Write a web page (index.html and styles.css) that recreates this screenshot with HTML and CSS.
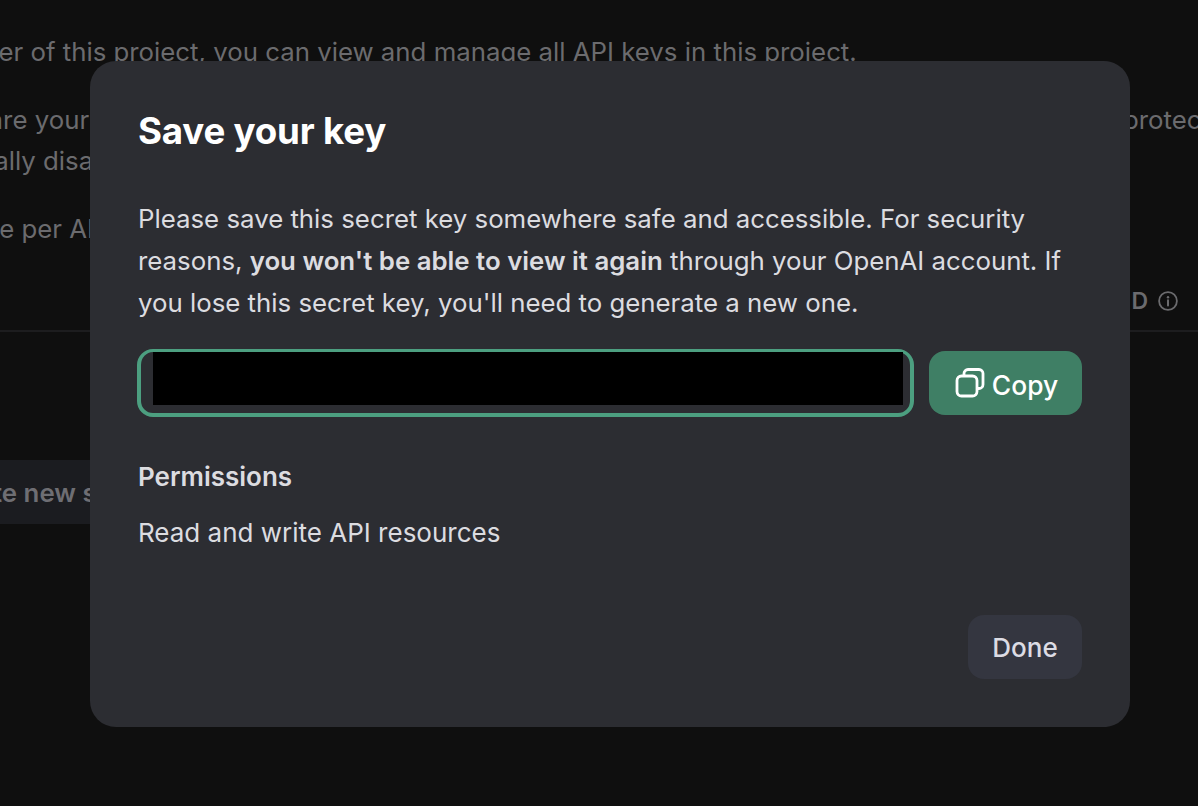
FILE: index.html
```html
<!DOCTYPE html>
<html lang="en">
<head>
  <meta charset="UTF-8">
  <title>Save your key</title>
  <link rel="stylesheet" href="styles.css">
</head>
<body>
  <div class="page">
    <p class="line line-first"><span class="cut-owner">Since you're an owner of this project, you can view and manage all API keys in this project.</span></p>
    <p class="line line-share">
      <span class="cut-share">Do not share your</span>
      <span class="right-part">protect</span>
    </p>
    <p class="line line-disable"><span class="cut-disable">automatically disa</span></p>
    <p class="line line-rate"><span class="cut-rate">View usage per AI</span></p>
    <div class="table-head">
      <span class="head-label">D</span>
      <svg class="info-icon" width="20" height="20" viewBox="0 0 20 20" fill="none">
        <circle cx="10" cy="10" r="8.9" stroke="currentColor" stroke-width="1.8"/>
        <circle cx="10" cy="6.2" r="1.2" fill="currentColor"/>
        <path d="M10 9.2v5.2" stroke="currentColor" stroke-width="2" stroke-linecap="round"/>
      </svg>
    </div>
    <button class="create-btn"><span class="cut-create">Create new secret key</span></button>
  </div>

  <div class="modal">
    <h1 class="modal-title">Save your key</h1>
    <p class="modal-text">Please save this secret key somewhere safe and accessible. For security reasons, <strong>you won't be able to view it again</strong> through your OpenAI account. If you lose this secret key, you'll need to generate a new one.</p>
    <div class="key-row">
      <div class="key-input"><div class="key-redacted"></div></div>
      <button class="copy-btn">
        <svg width="32" height="32" viewBox="0 0 32 32" fill="none">
          <rect x="2" y="9" width="20" height="20" rx="4.5" stroke="currentColor" stroke-width="2.8"/>
          <path d="M9 9V6.5C9 4.3 10.8 2.5 13 2.5h11c2.2 0 4 1.8 4 4v11c0 2.2-1.8 4-4 4h-2" stroke="currentColor" stroke-width="2.8"/>
        </svg>
        <span class="copy-label">Copy</span>
      </button>
    </div>
    <h2 class="perm-title">Permissions</h2>
    <p class="perm-text">Read and write API resources</p>
    <div class="modal-footer">
      <button class="done-btn">Done</button>
    </div>
  </div>
</body>
</html>
```

FILE: styles.css
```css
html, body {
  height: 100%;
  margin: 0;
}

body {
  background-color: #0f0f0f;
  font-family: Inter, "Liberation Sans", sans-serif;
  overflow: hidden;
}

.page {
  height: 100%;
  overflow: hidden;
  color: #6b6b6e;
  font-size: 25.8px;
  line-height: 41px;
}

.line {
  display: flex;
  justify-content: space-between;
  margin: 0;
  white-space: nowrap;
}

.line-first { margin-top: 31px; }
.line-share { margin-top: 27px; }
.line-rate { margin-top: 27px; }

.cut-owner { margin-left: -249px; }
.cut-share { margin-left: -128px; }
.cut-disable { margin-left: -126px; }
.cut-rate { margin-left: -127px; }

.right-part {
  flex: 0 0 75px;
  min-width: 0;
}

.table-head {
  display: flex;
  justify-content: flex-end;
  align-items: center;
  gap: 10px;
  height: 46px;
  margin-top: 29px;
  padding-right: 20px;
  padding-bottom: 6px;
  border-bottom: 2px solid #1d1d1f;
  font-weight: 600;
  font-size: 23px;
}

.info-icon {
  color: #6b6b6e;
}

.create-btn {
  display: block;
  width: 300px;
  height: 64px;
  margin: 128px 0 0;
  padding: 0;
  border: 0;
  background-color: #1b1c20;
  color: #6e6e73;
  font-family: inherit;
  font-size: 25.8px;
  font-weight: 600;
  text-align: left;
  white-space: nowrap;
}

.cut-create { margin-left: -66px; }

.modal {
  position: fixed;
  left: 90px;
  top: 61px;
  width: 1040px;
  height: 666px;
  box-sizing: border-box;
  padding: 48px;
  display: flex;
  flex-direction: column;
  background-color: #2c2d32;
  border-radius: 26px;
  color: #dcdce0;
  font-size: 25.8px;
  line-height: 42px;
}

.modal-title {
  margin: 0;
  color: #fff;
  font-size: 36.7px;
  line-height: 44px;
  font-weight: 700;
  letter-spacing: -0.2px;
}

.modal-text {
  margin: 45px 0 0;
}

.modal-text strong {
  font-weight: 600;
}

.key-row {
  display: flex;
  gap: 15px;
  align-items: flex-start;
  margin-top: 25px;
  margin-left: -1px;
}

.key-input {
  flex: 1;
  height: 68px;
  box-sizing: border-box;
  padding: 0 7px 8px 12px;
  border-style: solid;
  border-color: #4c9f80;
  border-width: 3px 4px 4px;
  border-radius: 16px;
}

.key-redacted {
  width: 750px;
  height: 53px;
  background-color: #000;
}

.copy-btn {
  display: flex;
  align-items: center;
  justify-content: center;
  gap: 5px;
  width: 153px;
  height: 64px;
  margin-top: 2px;
  padding: 0 0 0 2px;
  border: 0;
  border-radius: 16px;
  background-color: #3f7f65;
  color: #fff;
  font-family: inherit;
  font-size: 26.4px;
  font-weight: 500;
}

.copy-label {
  margin-top: 3px;
}

.perm-title {
  margin: 39px 0 0;
  font-size: 26px;
  line-height: 42px;
  font-weight: 600;
}

.perm-text {
  margin: 14px 0 0;
  font-size: 26px;
}

.modal-footer {
  display: flex;
  justify-content: flex-end;
  margin-top: auto;
}

.done-btn {
  width: 114px;
  height: 64px;
  padding: 0;
  border: 0;
  border-radius: 16px;
  background-color: #343640;
  color: #dcdce4;
  font-family: inherit;
  font-size: 26px;
  font-weight: 500;
}
```
